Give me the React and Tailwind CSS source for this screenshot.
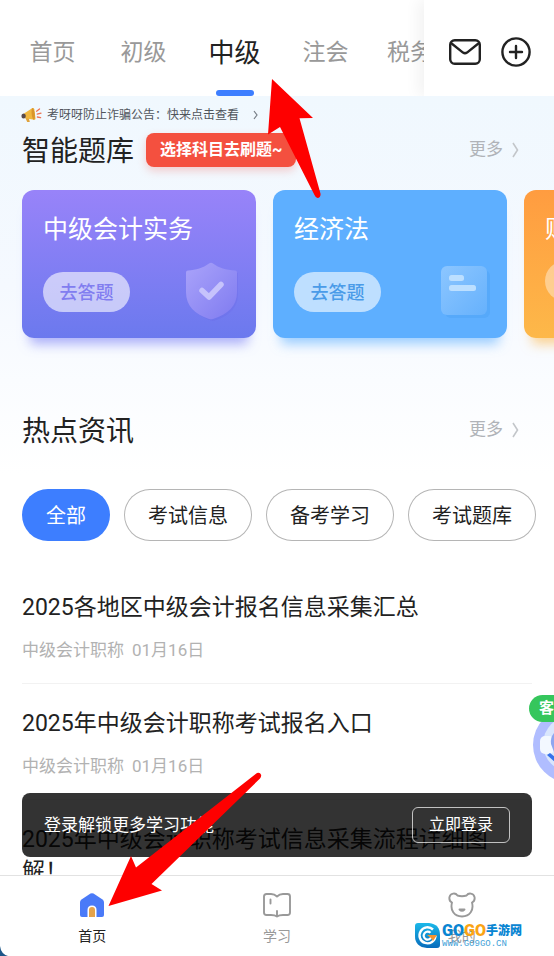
import React from "react";

const tabs = ["首页", "初级", "中级", "注会", "税务师"];
const chips = ["全部", "考试信息", "备考学习", "考试题库"];
const articles = [
  "2025各地区中级会计报名信息采集汇总",
  "2025年中级会计职称考试报名入口",
  "2025年中级会计职称考试信息采集流程详细图解！",
];

function Header() {
  return (
    <header className="flex h-24 shrink-0 bg-white">
      <nav className="flex min-w-0 flex-1 overflow-hidden pl-[7px]">
        {tabs.map((tab) => {
          const active = tab === "中级";
          return (
            <a
              key={tab}
              href="#"
              className={
                "flex min-w-[91px] shrink-0 flex-col items-center px-4 " +
                (active ? "text-[26px] text-[#222222]" : "text-[23px] text-[#999999]")
              }
            >
              <span className="flex h-[90px] items-center pt-4">{tab}</span>
              <span className={"h-[6px] w-[38px] rounded-full " + (active ? "bg-[#3d7eff]" : "bg-transparent")} />
            </a>
          );
        })}
      </nav>
      <div className="flex w-[130px] shrink-0 items-center gap-5 bg-white pl-[25px] pt-2 shadow-[-6px_0_14px_rgba(0,0,0,0.05)]">
        <button aria-label="消息">
          <svg width="32" height="28" viewBox="0 0 32 28" fill="none" stroke="#222" strokeWidth="2.4" strokeLinejoin="round">
            <rect x="1.2" y="2.2" width="29.6" height="23.6" rx="4.5" />
            <path d="M2 5 14 14.600Q16 16 18 14.600L30 5" />
          </svg>
        </button>
        <button aria-label="添加">
          <svg width="30" height="30" viewBox="0 0 30 30" fill="none" stroke="#222" strokeWidth="2.4" strokeLinecap="round">
            <circle cx="15" cy="15" r="13.6" />
            <path d="M15 9v12M9 15h12" />
          </svg>
        </button>
      </div>
    </header>
  );
}

function Megaphone() {
  return (
    <svg width="21" height="16" viewBox="0 0 21 16">
      <path d="M4 10l2.2 5h2.6L7.4 9z" fill="#e0a33c" />
      <path d="M3 6.500 11.500 1c.8-.3 1.500.2 1.800 1.200l1.200 9c0 1-.6 1.700-1.500 1.600L3 11z" fill="#f0b73f" />
      <path d="M11.500 1c1 0 1.800 2.500 2.200 5.500s.2 6-.7 6.300c-.9.2-1.900-2.400-2.300-5.600-.3-3.200-.1-6 .8-6.200z" fill="#d9952b" />
      <ellipse cx="2.600" cy="9" rx="2.200" ry="2.600" fill="#574a4c" />
      <path d="M15.600 4.200 18.500 2M16.200 7.200 20 6.200M16.400 10l3.200.6" stroke="#ef7350" strokeWidth="1.300" strokeLinecap="round" />
    </svg>
  );
}

function SectionHead({ title, children }) {
  return (
    <div className="flex h-[34px] items-center pl-[22px] pr-[34px]">
      <h2 className="shrink-0 pt-1 text-[28px] leading-[34px] text-[#222222]">{title}</h2>
      {children}
      <a href="#" className="ml-auto flex items-center gap-2 text-[17px] text-[#b0b3b8]">
        更多
        <svg width="9" height="16" viewBox="0 0 9 16" fill="none" stroke="#c3c6ca" strokeWidth="1.600">
          <path d="M2 1l4.500 7L2 15" />
        </svg>
      </a>
    </div>
  );
}

function ShieldIcon() {
  return (
    <svg width="56" height="62" viewBox="0 0 56 62">
      <defs>
        <linearGradient id="shield" x1="0" y1="0" x2="1" y2="1">
          <stop offset="0" stopColor="#aaa3fa" />
          <stop offset="1" stopColor="#7f7bf0" />
        </linearGradient>
      </defs>
      <path d="M29 4c6 4.500 14 7 25 8v21c0 14-10 23-25 27C15 56 5 47 5 33V12c10-1 18-3.500 24-8z" fill="#6865e2" opacity=".25" />
      <path d="M25 2.500q2-1.500 4 0C35 7 42 9 51 9.500q2 0 2 2V31c0 14-9 22-24 27q-2 .5-4 0C11 53 2 45 2 31V11.500q0-2 2-2C12 9 19 7 25 2.500z" fill="url(#shield)" />
      <path d="M18 29.500l7 6.500 12-12.500" fill="none" stroke="#c6c3fc" strokeWidth="5.500" strokeLinecap="round" strokeLinejoin="round" />
    </svg>
  );
}

function DocIcon() {
  return (
    <svg width="54" height="62" viewBox="0 0 54 62">
      <defs>
        <linearGradient id="doc" x1="0" y1="0" x2="1" y2="1">
          <stop offset="0" stopColor="#8cc6ff" />
          <stop offset="1" stopColor="#66b1fc" />
        </linearGradient>
      </defs>
      <rect x="8" y="9" width="45" height="48" rx="6" fill="#479df0" opacity=".35" />
      <rect x="4" y="5" width="46" height="49" rx="6" fill="url(#doc)" />
      <rect x="12" y="14" width="15" height="6" rx="2.500" fill="#bcdfff" />
      <rect x="12" y="24" width="27" height="6" rx="2.500" fill="#bcdfff" />
    </svg>
  );
}

const courses = [
  {
    name: "中级会计实务",
    card: "bg-linear-to-b from-[#9883f9] to-[#6b79ee] shadow-[0_14px_12px_-8px_rgba(120,125,245,0.6)]",
    pill: "bg-white/60 text-[#817df0]",
    icon: <ShieldIcon />,
  },
  {
    name: "经济法",
    card: "bg-[#5eafff] shadow-[0_14px_12px_-8px_rgba(94,175,255,0.6)]",
    pill: "bg-white/60 text-[#4a9be8]",
    icon: <DocIcon />,
  },
  {
    name: "财务管理",
    card: "bg-linear-to-b from-[#ff9c40] to-[#fdb849] shadow-[0_14px_12px_-8px_rgba(253,184,73,0.6)]",
    pill: "bg-white/40 text-[#f09a3a]",
    icon: null,
  },
];

function CourseCard({ course }) {
  return (
    <article className={"flex h-[148px] w-[234px] shrink-0 flex-col rounded-xl pl-[21px] pr-4 pt-6 " + course.card}>
      <h3 className="text-[25px] leading-8 text-white">{course.name}</h3>
      <div className="mt-[15px] flex items-center justify-between">
        <button className={"h-10 w-[87px] rounded-full text-[18px] font-medium " + course.pill}>去答题</button>
        {course.icon}
      </div>
    </article>
  );
}

function Article({ title }) {
  return (
    <li className="border-b border-[#f2f2f2] pb-[21px] pt-6">
      <a href="#" className="block text-[23px] leading-8 text-[#222222]">{title}</a>
      <p className="mt-[14px] flex gap-2 text-[17px] leading-6 text-[#b2b2b2]">
        <span>中级会计职称</span>
        <time>01月16日</time>
      </p>
    </li>
  );
}

function LoginBar() {
  return (
    <aside className="absolute inset-x-[22px] bottom-[18px] flex h-16 items-center justify-between rounded-lg bg-black/80 px-[22px] text-white">
      <span className="pt-[2px] text-[17px]">登录解锁更多学习功能</span>
      <button className="h-9 rounded-md border border-white/70 px-4 text-[16px]">立即登录</button>
    </aside>
  );
}

function ServiceButton() {
  return (
    <button aria-label="客服" className="absolute bottom-[92px] right-0 flex h-[88px] w-[25px] items-start overflow-hidden text-left">
      <svg className="absolute left-0 top-0" width="25" height="88" viewBox="0 0 25 88">
        <circle cx="42" cy="50" r="38" fill="#b0bdff" />
        <circle cx="42" cy="49" r="28" fill="#d9e6fd" />
        <rect x="11" y="41" width="14" height="18" rx="5" fill="#f3f8ff" />
        <path d="M25 38q-4 5-3 11l3 8z" fill="#8ea6f0" />
        <path d="M18 60l3-2 5 4v5z" fill="#3672ea" />
      </svg>
      <span className="relative h-[27px] w-12 shrink-0 rounded-full bg-[#35c65c] pl-[10px] text-[15px] font-bold leading-[27px] text-white">客服</span>
    </button>
  );
}

function HomeIcon() {
  return (
    <svg width="26" height="26" viewBox="0 0 26 26">
      <path d="M11.500 1.600q1.500-.9 3 0l9 6q1.500 1 1.500 2.600V23q0 2-2 2H3q-2 0-2-2V10.200Q1 8.600 2.500 7.600z" fill="#4a7af8" />
      <path d="M8.500 25v-7q0-4.500 4.500-4.500t4.500 4.500v7z" fill="#fff" />
      <path d="M10 25v-7q0-3 3-3t3 3v7z" fill="#e5a34b" />
    </svg>
  );
}

function BookIcon() {
  return (
    <svg width="28" height="26" viewBox="0 0 28 26" fill="none" stroke="#999" strokeWidth="1.900" strokeLinejoin="round" strokeLinecap="round">
      <path d="M14 4.500Q11.500 2 8 2H3.500Q1 2 1 4.500v16Q1 23 3.500 23H8q4 0 6 1.500Q16 23 20 23h4.500q2.500 0 2.500-2.500v-16Q27 2 24.500 2H20q-3.500 0-6 2.500zM14 19v5.500M7.500 7.500v4" />
    </svg>
  );
}

function BearIcon() {
  return (
    <svg width="28" height="26" viewBox="0 0 28 26" fill="none" stroke="#999" strokeWidth="1.900" strokeLinejoin="round" strokeLinecap="round">
      <path d="M9.500 3.500C7.500.500 2.500 1 1.500 5c-.5 2.500.5 4.500 2.500 5.500C2 18 6 24.500 14 24.500S26 18 24 10.500c2-1 3-3 2.500-5.500-1-4-6-4.500-8-1.500-3 1-6 1-9 0z" />
      <path d="M11.500 17.500q2.500 2.500 5 0z" fill="#999" />
    </svg>
  );
}

function Watermark() {
  return (
    <div className="absolute bottom-[6px] right-8 flex h-[30px] items-center gap-[2px]">
      <svg width="25" height="25" viewBox="0 0 25 25">
        <defs>
          <linearGradient id="mark" x1="0" y1="0" x2="0" y2="1">
            <stop offset="0" stopColor="#1bb8e9" />
            <stop offset="1" stopColor="#086cbc" />
          </linearGradient>
        </defs>
        <path d="M3 0h11q11 1 11 12v10q0 3-3 3H12Q0 24 0 13V3q0-3 3-3z" fill="url(#mark)" />
        <path d="M18 6.500A8 8 0 1 0 20.500 13" fill="none" stroke="#fff" strokeWidth="2.400" />
        <path d="M15.500 9.800a4 4 0 1 0 1 4" fill="none" stroke="#fff" strokeWidth="2.200" />
        <path d="M12 12h10l-4 6-2-3z" fill="#f7932c" />
      </svg>
      <div className="flex flex-col items-start">
        <p className="flex h-[18px] items-center whitespace-nowrap text-[12px] font-black text-[#0985d2]">
          <b className="font-['Liberation_Sans_Narrow','Roboto',sans-serif] text-[16px] font-black">GO</b>
          <b className="font-['Liberation_Sans_Narrow','Roboto',sans-serif] text-[16px] font-black text-[#fba414]">GO</b>
          手游网
        </p>
        <p className="font-['Liberation_Mono',monospace] text-[9px] leading-[8px] text-[#3f9fd8]">WWW.GO9GO.CN</p>
      </div>
    </div>
  );
}

function BottomNav() {
  const items = [
    { label: "首页", icon: <HomeIcon />, color: "text-[#222222]" },
    { label: "学习", icon: <BookIcon />, color: "text-[#999999]" },
    { label: "我的", icon: <BearIcon />, color: "text-[#999999]" },
  ];
  return (
    <nav className="relative grid h-[81px] shrink-0 grid-cols-3 overflow-hidden border-t border-[#e2e2e2] bg-white">
      {items.map((item) => (
        <a key={item.label} href="#" className={"flex flex-col items-center gap-2 pt-4 text-[14px] leading-5 " + item.color}>
          {item.icon}
          {item.label}
        </a>
      ))}
      <svg className="absolute bottom-0 left-0" width="8" height="10" viewBox="0 0 8 10">
        <path d="M0 0Q1 8 8 10H0z" fill="#1e5688" />
      </svg>
      <Watermark />
    </nav>
  );
}

function Arrows() {
  return (
    <svg className="pointer-events-none absolute left-0 top-0" width="554" height="956" viewBox="0 0 554 956" fill="#fe0000">
      <path d="M272 79L313 118 299.500 118.300 320.600 194Q320.500 198 317.500 198 315.500 197.500 314.500 195L280 127 268 134.500z" />
      <path d="M108.500 906L131 856 136 867.500 257 773Q260 772 261.200 775 261.300 777 260 778.500L151.500 884 162 890.500z" />
    </svg>
  );
}

export default function App() {
  return (
    <div className="relative flex h-screen flex-col overflow-hidden bg-white font-['Roboto','Noto_Sans_CJK_SC',sans-serif]">
      <Header />
      <div className="relative min-h-0 flex-1">
        <main className="h-full overflow-hidden">
          <div className="bg-linear-to-b from-[#f0f8fe] via-[#f5f9ff] to-white pb-7">
            <a href="#" className="flex h-[37px] items-center gap-[5px] pl-[21px] text-[12px] text-[#50555c]">
              <Megaphone />
              考呀呀防止诈骗公告：快来点击查看
              <svg className="ml-2" width="7" height="10" viewBox="0 0 7 10" fill="none" stroke="#777e86" strokeWidth="1.200">
                <path d="M2 1l3 4-3 4" />
              </svg>
            </a>
            <SectionHead title="智能题库">
              <span className="ml-3 flex h-[34px] shrink-0 items-center rounded-lg bg-[#f4503f] px-[14px] text-[16px] font-bold text-white shadow-[0_4px_8px_rgba(244,80,63,0.25)]">
                选择科目去刷题~
              </span>
            </SectionHead>
            <div className="mt-[23px] flex gap-[17px] overflow-hidden pb-7 pl-[22px]">
              {courses.map((course) => (
                <CourseCard key={course.name} course={course} />
              ))}
            </div>
            <div className="mt-[47px]">
              <SectionHead title="热点资讯" />
            </div>
          </div>
          <div className="mt-[14px] flex gap-[14px] overflow-hidden pl-[22px]">
            {chips.map((chip) => (
              <button
                key={chip}
                className={
                  "h-[52px] shrink-0 rounded-full px-6 pt-[2px] text-[20px] " +
                  (chip === "全部" ? "bg-[#3d7eff] text-white" : "text-[#222222] ring-1 ring-inset ring-[#b5b5b5]")
                }
              >
                {chip}
              </button>
            ))}
          </div>
          <ul className="mx-[22px] mt-[27px]">
            {articles.map((title) => (
              <Article key={title} title={title} />
            ))}
          </ul>
        </main>
        <ServiceButton />
        <LoginBar />
      </div>
      <BottomNav />
      <Arrows />
    </div>
  );
}
